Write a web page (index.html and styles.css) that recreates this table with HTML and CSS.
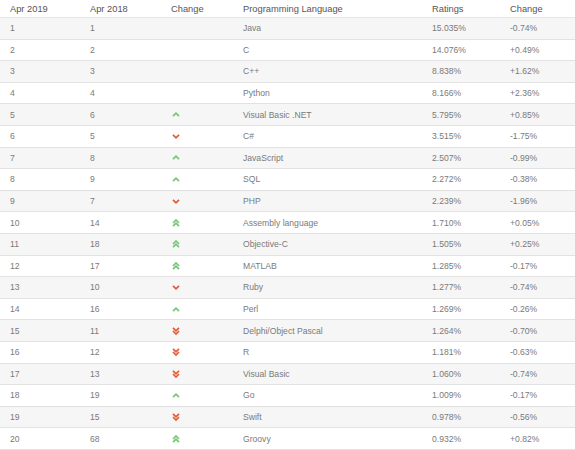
FILE: index.html
```html
<!DOCTYPE html>
<html>
<head>
<meta charset="utf-8">
<link rel="stylesheet" href="styles.css">
</head>
<body>
<div class="table">
  <div class="row head">
    <div>Apr 2019</div><div>Apr 2018</div><div>Change</div><div>Programming Language</div><div>Ratings</div><div>Change</div>
  </div>
  <div class="row"><div>1</div><div>1</div><div></div><div>Java</div><div>15.035%</div><div>-0.74%</div></div>
  <div class="row"><div>2</div><div>2</div><div></div><div>C</div><div>14.076%</div><div>+0.49%</div></div>
  <div class="row"><div>3</div><div>3</div><div></div><div>C++</div><div>8.838%</div><div>+1.62%</div></div>
  <div class="row"><div>4</div><div>4</div><div></div><div>Python</div><div>8.166%</div><div>+2.36%</div></div>
  <div class="row"><div>5</div><div>6</div><div class="chg"><svg class="ico up" viewBox="0 0 8 5"><polyline points="1,4.2 4,1.2 7,4.2"/></svg></div><div>Visual Basic .NET</div><div>5.795%</div><div>+0.85%</div></div>
  <div class="row"><div>6</div><div>5</div><div class="chg"><svg class="ico down" viewBox="0 0 8 5"><polyline points="1,0.8 4,3.8 7,0.8"/></svg></div><div>C#</div><div>3.515%</div><div>-1.75%</div></div>
  <div class="row"><div>7</div><div>8</div><div class="chg"><svg class="ico up" viewBox="0 0 8 5"><polyline points="1,4.2 4,1.2 7,4.2"/></svg></div><div>JavaScript</div><div>2.507%</div><div>-0.99%</div></div>
  <div class="row"><div>8</div><div>9</div><div class="chg"><svg class="ico up" viewBox="0 0 8 5"><polyline points="1,4.2 4,1.2 7,4.2"/></svg></div><div>SQL</div><div>2.272%</div><div>-0.38%</div></div>
  <div class="row"><div>9</div><div>7</div><div class="chg"><svg class="ico down" viewBox="0 0 8 5"><polyline points="1,0.8 4,3.8 7,0.8"/></svg></div><div>PHP</div><div>2.239%</div><div>-1.96%</div></div>
  <div class="row"><div>10</div><div>14</div><div class="chg"><svg class="ico2 up" viewBox="0 0 8 8"><polyline points="1,4 4,1 7,4"/><polyline points="1,7.2 4,4.2 7,7.2"/></svg></div><div>Assembly language</div><div>1.710%</div><div>+0.05%</div></div>
  <div class="row"><div>11</div><div>18</div><div class="chg"><svg class="ico2 up" viewBox="0 0 8 8"><polyline points="1,4 4,1 7,4"/><polyline points="1,7.2 4,4.2 7,7.2"/></svg></div><div>Objective-C</div><div>1.505%</div><div>+0.25%</div></div>
  <div class="row"><div>12</div><div>17</div><div class="chg"><svg class="ico2 up" viewBox="0 0 8 8"><polyline points="1,4 4,1 7,4"/><polyline points="1,7.2 4,4.2 7,7.2"/></svg></div><div>MATLAB</div><div>1.285%</div><div>-0.17%</div></div>
  <div class="row"><div>13</div><div>10</div><div class="chg"><svg class="ico down" viewBox="0 0 8 5"><polyline points="1,0.8 4,3.8 7,0.8"/></svg></div><div>Ruby</div><div>1.277%</div><div>-0.74%</div></div>
  <div class="row"><div>14</div><div>16</div><div class="chg"><svg class="ico up" viewBox="0 0 8 5"><polyline points="1,4.2 4,1.2 7,4.2"/></svg></div><div>Perl</div><div>1.269%</div><div>-0.26%</div></div>
  <div class="row"><div>15</div><div>11</div><div class="chg"><svg class="ico2 down" viewBox="0 0 8 8"><polyline points="1,0.8 4,3.8 7,0.8"/><polyline points="1,4 4,7 7,4"/></svg></div><div>Delphi/Object Pascal</div><div>1.264%</div><div>-0.70%</div></div>
  <div class="row"><div>16</div><div>12</div><div class="chg"><svg class="ico2 down" viewBox="0 0 8 8"><polyline points="1,0.8 4,3.8 7,0.8"/><polyline points="1,4 4,7 7,4"/></svg></div><div>R</div><div>1.181%</div><div>-0.63%</div></div>
  <div class="row"><div>17</div><div>13</div><div class="chg"><svg class="ico2 down" viewBox="0 0 8 8"><polyline points="1,0.8 4,3.8 7,0.8"/><polyline points="1,4 4,7 7,4"/></svg></div><div>Visual Basic</div><div>1.060%</div><div>-0.74%</div></div>
  <div class="row"><div>18</div><div>19</div><div class="chg"><svg class="ico up" viewBox="0 0 8 5"><polyline points="1,4.2 4,1.2 7,4.2"/></svg></div><div>Go</div><div>1.009%</div><div>-0.17%</div></div>
  <div class="row"><div>19</div><div>15</div><div class="chg"><svg class="ico2 down" viewBox="0 0 8 8"><polyline points="1,0.8 4,3.8 7,0.8"/><polyline points="1,4 4,7 7,4"/></svg></div><div>Swift</div><div>0.978%</div><div>-0.56%</div></div>
  <div class="row"><div>20</div><div>68</div><div class="chg"><svg class="ico2 up" viewBox="0 0 8 8"><polyline points="1,4 4,1 7,4"/><polyline points="1,7.2 4,4.2 7,7.2"/></svg></div><div>Groovy</div><div>0.932%</div><div>+0.82%</div></div>
</div>
</body>
</html>
```

FILE: styles.css
```css
html, body {
  margin: 0;
  padding: 0;
  background: #fff;
}
body {
  font-family: "Liberation Sans", Arial, sans-serif;
  width: 575px;
  height: 450px;
  overflow: hidden;
}
.table {
  display: flex;
  flex-direction: column;
}
.row {
  display: grid;
  grid-template-columns: 80px 81px 72px 189px 78px 75px;
  align-items: center;
  height: 21.6px;
  box-sizing: border-box;
  border-bottom: 1px solid #e2e2e2;
  font-size: 8.6px;
  color: #7a7a7a;
}
.row > div {
  padding-left: 10px;
  white-space: nowrap;
}
.row:nth-child(even) {
  background: #f6f6f6;
}
.row.head {
  height: 18px;
  font-size: 9.3px;
  color: #555;
  background: #fff;
  border-bottom: 1px solid #e6e6e6;
}
.chg {
  display: flex;
  align-items: center;
  padding-left: 11px !important;
}
.ico {
  width: 8px;
  height: 5px;
  display: block;
}
.ico2 {
  width: 8px;
  height: 8px;
  display: block;
}
.ico polyline, .ico2 polyline {
  fill: none;
  stroke-width: 1.7;
  stroke-linecap: butt;
}
.up polyline {
  stroke: #74c674;
}
.down polyline {
  stroke: #e55a30;
}
```
